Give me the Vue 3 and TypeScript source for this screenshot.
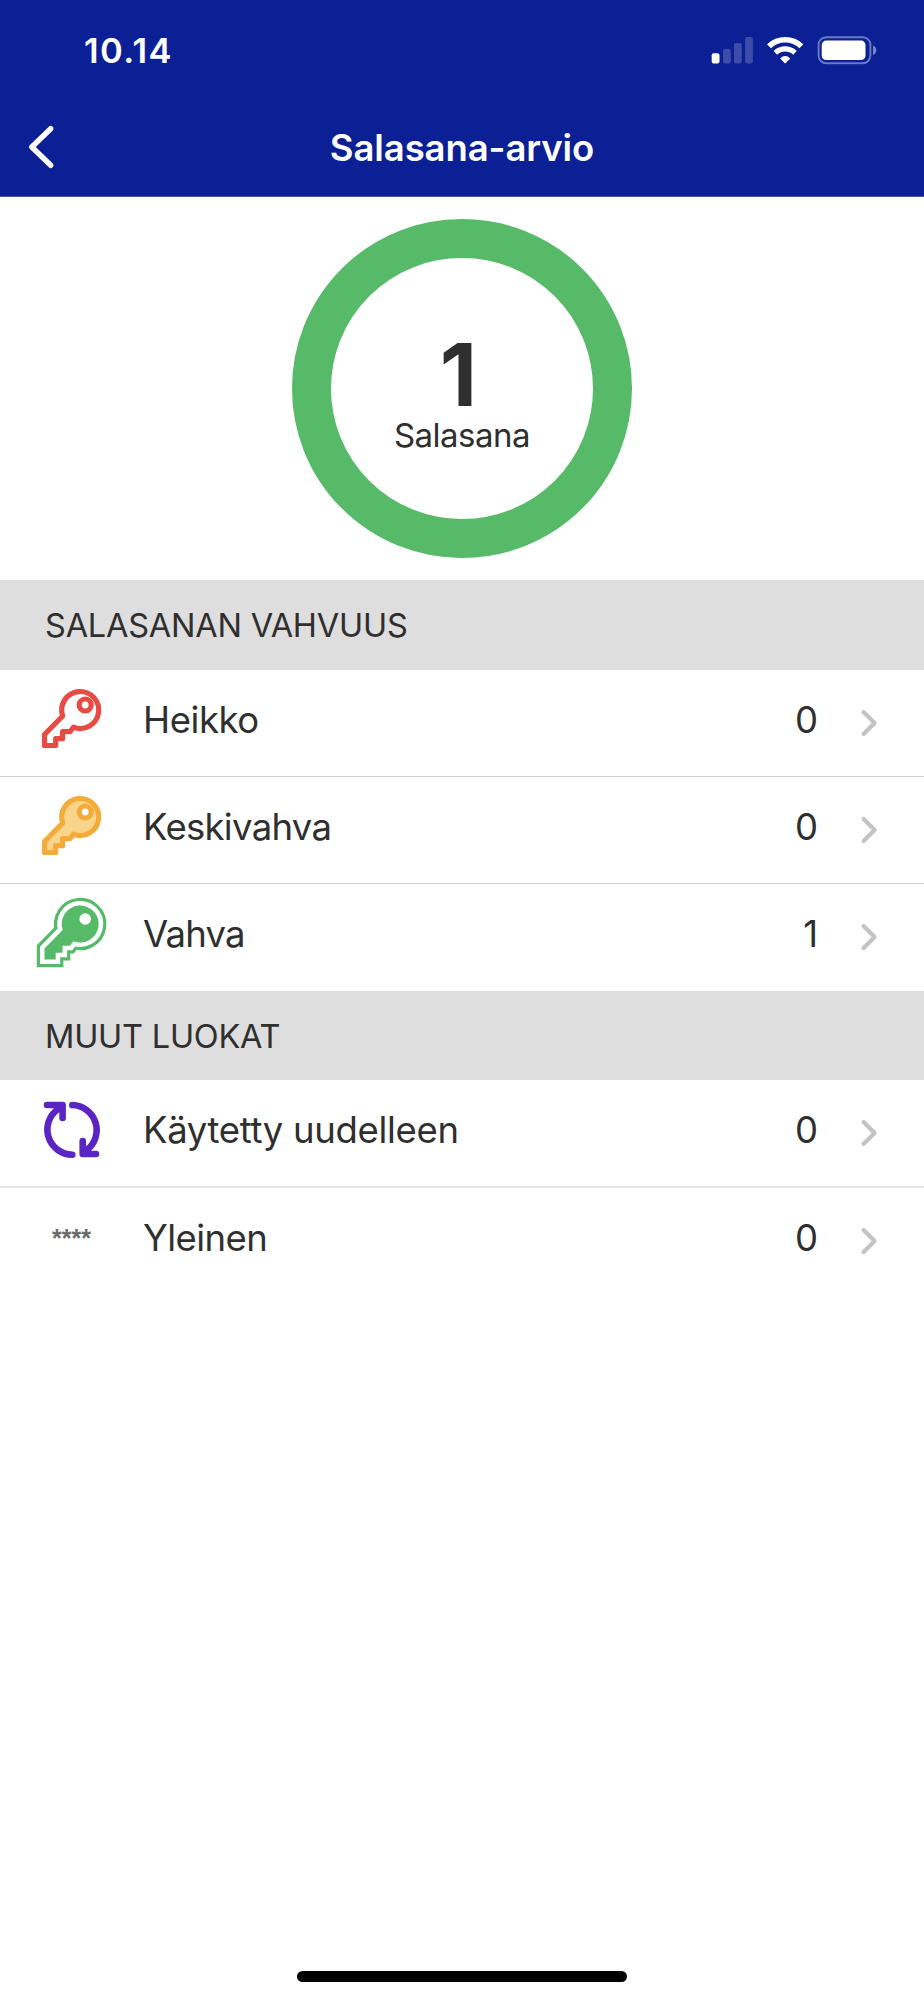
<script setup lang="ts">
type IconName = 'weak' | 'medium' | 'strong' | 'reused' | 'common'

interface Category {
  label: string
  tracking: number
  count: number
  icon: IconName
}

interface Section {
  title: string
  rows: Category[]
}

const sections: Section[] = [
  {
    title: 'SALASANAN VAHVUUS',
    rows: [
      { label: 'Heikko', tracking: -0.45, count: 0, icon: 'weak' },
      { label: 'Keskivahva', tracking: -0.7, count: 0, icon: 'medium' },
      { label: 'Vahva', tracking: -0.8, count: 1, icon: 'strong' },
    ],
  },
  {
    title: 'MUUT LUOKAT',
    rows: [
      { label: 'Käytetty uudelleen', tracking: -0.32, count: 0, icon: 'reused' },
      { label: 'Yleinen', tracking: -0.55, count: 0, icon: 'common' },
    ],
  },
]

const keyPath =
  'M32.7 36 A18.5 18.5 0 1 1 43.4 47.2 L40 51.7 H32.6 V58.7 H25.7 V65.5 H14.5 V54.5 Z'
</script>

<template>
  <div class="screen">
    <header class="header">
      <div class="status">
        <span class="time">10.14</span>
        <svg class="status-icons" width="170" height="32" viewBox="710 34 170 32">
          <rect x="711.7" y="53.3" width="7.8" height="10.2" rx="2" fill="#fff" />
          <g fill="#fff" fill-opacity="0.2">
            <rect x="723" y="49" width="7.8" height="14.5" rx="2" />
            <rect x="734" y="43" width="7.8" height="20.5" rx="2" />
            <rect x="745.1" y="37" width="7.8" height="26.5" rx="2" />
          </g>
          <g fill="none" stroke="#fff">
            <path d="M769 46.2 A23.6 23.6 0 0 1 801.4 46.2" stroke-width="5.6" />
            <path d="M775.4 52.8 A14.2 14.2 0 0 1 795 52.8" stroke-width="5.2" />
          </g>
          <path d="M780.2 58.4 Q785.2 53.7 790.2 58.4 L785.9 63.1 Q785.2 63.8 784.5 63.1 Z" fill="#fff" />
          <rect x="818.6" y="37.2" width="51.8" height="26" rx="7.6" fill="none" stroke="#fff" stroke-opacity="0.4" stroke-width="1.9" />
          <rect x="821.7" y="40.6" width="43.8" height="19.4" rx="4.4" fill="#fff" />
          <path d="M873 45.6 Q876.3 47 876.3 50.3 Q876.3 53.6 873 55 Z" fill="#fff" fill-opacity="0.45" />
        </svg>
      </div>
      <div class="nav">
        <button class="back" aria-label="Takaisin">
          <svg width="28" height="46" viewBox="27 124 28 46">
            <path d="M50.7 128.7 L31.8 147 L50.7 165.3" fill="none" stroke="#fff" stroke-width="5.4" stroke-linecap="round" stroke-linejoin="round" />
          </svg>
        </button>
        <h1 class="title">Salasana-arvio</h1>
      </div>
    </header>

    <section class="summary">
      <div class="ring">
        <span class="total">1</span>
        <span class="caption">Salasana</span>
      </div>
    </section>

    <section v-for="section in sections" :key="section.title" class="group">
      <h2 class="group-title"><span>{{ section.title }}</span></h2>
      <div v-for="row in section.rows" :key="row.label" class="row">
        <span v-if="row.icon === 'common'" class="icon stars">****</span>
        <svg v-else class="icon" width="80" height="80" viewBox="0 0 80 80" stroke-linejoin="round" stroke-linecap="round">
          <g v-if="row.icon === 'weak'" fill="none" stroke="#e84b43" stroke-width="5.2">
            <path :d="keyPath" />
            <circle cx="55.2" cy="25" r="6" />
          </g>
          <g v-else-if="row.icon === 'medium'" stroke="#f3ac3a" stroke-width="5.2">
            <path :d="keyPath" fill="#f8d58b" />
            <circle cx="55.2" cy="25" r="6" fill="#fff" />
          </g>
          <g v-else-if="row.icon === 'strong'">
            <path :d="keyPath" fill="none" stroke="#56ba69" stroke-width="15.4" stroke-linejoin="miter" />
            <path :d="keyPath" fill="none" stroke="#fff" stroke-width="9" stroke-linejoin="miter" />
            <path :d="keyPath" fill="#56ba69" />
            <circle cx="55.2" cy="25" r="5.8" fill="#fff" />
          </g>
          <g v-else fill="none" stroke="#5b25c4" stroke-width="6.6">
            <path d="M17 15 H32.6 V28 M32 15.8 L28 19.1 A25.1 25.1 0 0 0 42.3 64.7" />
            <path d="M66 64 H52.7 V51 M42.3 15 A25.1 25.1 0 0 1 56.6 60.2 L53 63.2" />
          </g>
        </svg>
        <span class="label" :style="{ letterSpacing: row.tracking + 'px' }">{{ row.label }}</span>
        <span class="count">{{ row.count }}</span>
        <svg class="chevron" width="18" height="30" viewBox="0 0 18 30">
          <path d="M3.6 4 L14.6 15.1 L3.6 26" fill="none" stroke="#c4c4c4" stroke-width="4.2" stroke-linecap="round" stroke-linejoin="round" />
        </svg>
      </div>
    </section>

    <div class="home-indicator"></div>
  </div>
</template>

<style>
body {
  margin: 0;
  background: #fff;
}
</style>

<style scoped>
.screen {
  box-sizing: border-box;
  display: flex;
  flex-direction: column;
  width: 924px;
  height: 2000px;
  padding-bottom: 18px;
  overflow: hidden;
  background: #fff;
  color: #2f2f2f;
  font-family: Inter, 'Liberation Sans', sans-serif;
}

.header {
  box-sizing: border-box;
  height: 197px;
  border-bottom: 1px solid #4957ab;
  background: #0a2094;
  color: #fff;
}

.status {
  display: flex;
  align-items: center;
  justify-content: space-between;
  height: 100px;
  padding: 0 44px 0 84px;
}

.time {
  padding-top: 2px;
  font-size: 34.5px;
  font-weight: 600;
  line-height: 40px;
  letter-spacing: 1.4px;
}

.nav {
  display: grid;
  grid-template-columns: 100px 1fr 100px;
  align-items: center;
  height: 94px;
}

.back {
  display: flex;
  width: 100px;
  padding: 0 0 0 27px;
  border: 0;
  background: none;
}

.title {
  margin: 0;
  padding-top: 1px;
  font-size: 36.5px;
  font-weight: 600;
  line-height: 44px;
  letter-spacing: -0.1px;
  text-align: center;
}

.summary {
  display: flex;
  justify-content: center;
  height: 383px;
}

.ring {
  box-sizing: border-box;
  display: flex;
  flex-direction: column;
  align-items: center;
  width: 339.4px;
  height: 339.4px;
  margin-top: 21.6px;
  padding-top: 77.5px;
  border: 39.2px solid #56ba69;
  border-radius: 50%;
}

.total {
  padding-right: 7px;
  font-size: 86.5px;
  font-weight: 700;
  line-height: 80px;
}

.caption {
  font-size: 33px;
  line-height: 40px;
  letter-spacing: -0.5px;
}

.group-title {
  box-sizing: border-box;
  display: flex;
  align-items: center;
  height: 90px;
  margin: 0;
  padding: 0 45px;
  background: #dedede;
  font-size: 32.5px;
  font-weight: 400;
  letter-spacing: -0.22px;
}

.group + .group .group-title {
  height: 89px;
  padding-top: 1px;
}

.row {
  box-sizing: border-box;
  display: flex;
  align-items: center;
  height: 107px;
  padding: 0 46px 6px 30px;
  border-bottom: 1px solid #cfcfcf;
}

.group + .group .row {
  height: 108px;
  border-bottom: 2px solid #e6e6e6;
}

.group .row:last-child,
.group + .group .row:last-child {
  border-bottom-color: transparent;
}

.icon {
  flex: none;
  width: 80px;
  height: 80px;
  margin-right: 33px;
}

.stars {
  color: #6a6a6a;
  font: 700 25px/80px 'Liberation Sans', sans-serif;
  text-align: center;
  text-indent: 3px;
}

.label {
  flex: 1;
  font-size: 36.5px;
  line-height: 44px;
}

.count {
  margin-right: 42px;
  font-size: 36.5px;
  line-height: 44px;
}

.chevron {
  flex: none;
  margin-top: 6px;
}

.home-indicator {
  width: 330px;
  height: 11px;
  margin: auto auto 0;
  border-radius: 6px;
  background: #000;
}
</style>
